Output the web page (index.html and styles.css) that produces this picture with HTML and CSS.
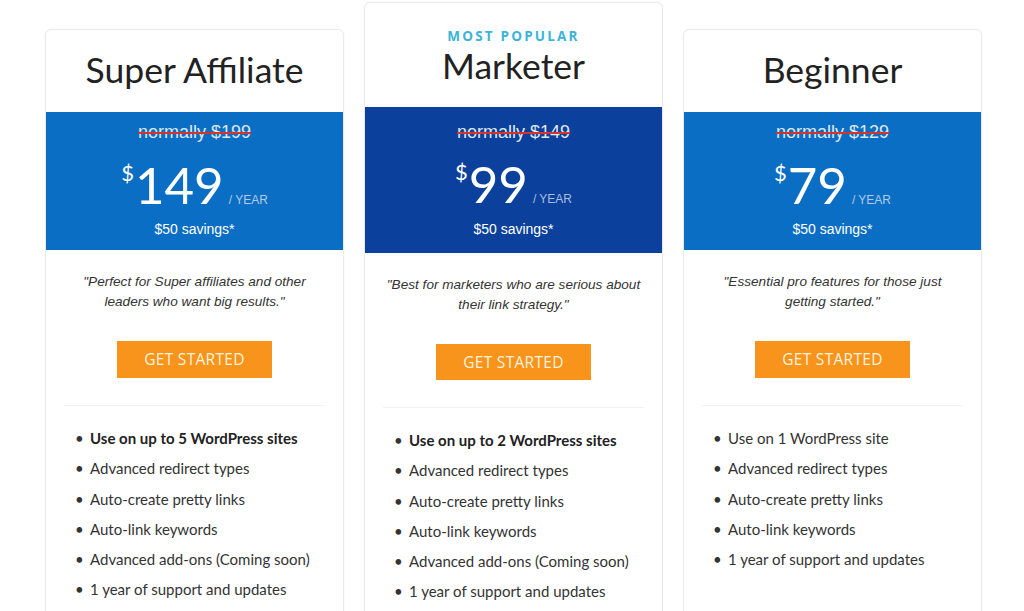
FILE: index.html
```html
<!DOCTYPE html>
<html lang="en">
<head>
<meta charset="utf-8">
<title>Pricing</title>
<link rel="stylesheet" href="styles.css">
</head>
<body>
<div class="plans">
  <div class="card side">
    <div class="head"><h2 class="title">Super Affiliate</h2></div>
    <div class="band">
      <div class="was"><s>normally $199</s></div>
      <div class="price"><span class="cur">$</span><span class="amt">149</span><span class="per">/ YEAR</span></div>
      <div class="save">$50 savings*</div>
    </div>
    <div class="body">
      <p class="quote">"Perfect for Super affiliates and other leaders who want big results."</p>
      <a class="btn" href="#">GET STARTED</a>
      <hr class="sep">
      <ul class="feats">
        <li><b>Use on up to 5 WordPress sites</b></li>
        <li>Advanced redirect types</li>
        <li>Auto-create pretty links</li>
        <li>Auto-link keywords</li>
        <li>Advanced add-ons (Coming soon)</li>
        <li>1 year of support and updates</li>
      </ul>
    </div>
  </div>
  <div class="card featured">
    <div class="head"><div class="popular">MOST POPULAR</div><h2 class="title">Marketer</h2></div>
    <div class="band">
      <div class="was"><s>normally $149</s></div>
      <div class="price"><span class="cur">$</span><span class="amt">99</span><span class="per">/ YEAR</span></div>
      <div class="save">$50 savings*</div>
    </div>
    <div class="body">
      <p class="quote">"Best for marketers who are serious about their link strategy."</p>
      <a class="btn" href="#">GET STARTED</a>
      <hr class="sep">
      <ul class="feats">
        <li><b>Use on up to 2 WordPress sites</b></li>
        <li>Advanced redirect types</li>
        <li>Auto-create pretty links</li>
        <li>Auto-link keywords</li>
        <li>Advanced add-ons (Coming soon)</li>
        <li>1 year of support and updates</li>
      </ul>
    </div>
  </div>
  <div class="card side">
    <div class="head"><h2 class="title">Beginner</h2></div>
    <div class="band">
      <div class="was"><s>normally $129</s></div>
      <div class="price"><span class="cur">$</span><span class="amt">79</span><span class="per">/ YEAR</span></div>
      <div class="save">$50 savings*</div>
    </div>
    <div class="body">
      <p class="quote">"Essential pro features for those just getting started."</p>
      <a class="btn" href="#">GET STARTED</a>
      <hr class="sep">
      <ul class="feats">
        <li>Use on 1 WordPress site</li>
        <li>Advanced redirect types</li>
        <li>Auto-create pretty links</li>
        <li>Auto-link keywords</li>
        <li>1 year of support and updates</li>
      </ul>
    </div>
  </div>
</div>
</body>
</html>
```

FILE: styles.css
```css
html, body {
  margin: 0;
  padding: 0;
  background: #ffffff;
  overflow: hidden;
}
body {
  font-family: Lato, "Liberation Sans", sans-serif;
  color: #333;
}
.plans {
  display: flex;
  align-items: flex-start;
  gap: 20px;
  padding-left: 45px;
}
.card {
  width: 299px;
  box-sizing: border-box;
  background: #fff;
  border: 1px solid #e7eaef;
  border-radius: 6px;
  box-shadow: 0 0 3px rgba(0, 0, 0, 0.04);
  padding-bottom: 60px;
}
.card.side { margin-top: 29px; }
.card.featured { margin-top: 2px; }

.head {
  text-align: center;
  padding: 20px 0 22px;
}
.featured .head { padding: 25px 0 21px; }
.title {
  margin: 0;
  font-family: Lato, sans-serif;
  font-weight: 400;
  font-size: 35.5px;
  line-height: 40px;
  color: #222;
}
.popular {
  font-family: "Open Sans", sans-serif;
  font-weight: 700;
  font-size: 13.5px;
  line-height: 16px;
  letter-spacing: 2.2px;
  color: #3ab4d9;
  margin-bottom: 2px;
}

.band {
  background: #0a6ec4;
  text-align: center;
  padding: 10px 0 12px;
  color: #fff;
}
.featured .band {
  background: #0b409d;
  padding: 15px 0 15px;
}
.was {
  font-family: "Liberation Sans", Arial, sans-serif;
  font-size: 18px;
  line-height: 20px;
  color: #dfe6ef;
}
.was s {
  text-decoration-color: #d4342c;
  text-decoration-thickness: 2px;
}
.price {
  margin-top: 13px;
  height: 60px;
  display: flex;
  justify-content: center;
  align-items: baseline;
  line-height: 60px;
}
.featured .price { margin-top: 12px; }
.cur {
  font-family: Lato, sans-serif;
  font-size: 22px;
  align-self: flex-start;
  line-height: 22px;
  margin-top: 7px;
  margin-right: 1px;
}
.amt {
  font-family: Lato, sans-serif;
  font-size: 51px;
  line-height: 60px;
}
.per {
  font-family: "Liberation Sans", Arial, sans-serif;
  font-size: 12px;
  color: #b3cbe6;
  margin-left: 5px;
}
.featured .per { color: #a9bedf; }
.save {
  margin-top: 5px;
  font-family: "Liberation Sans", Arial, sans-serif;
  font-size: 14px;
  line-height: 18px;
  color: #fff;
}
.featured .save { margin-top: 6px; }

.body {
  text-align: center;
  padding-top: 22px;
}
.quote {
  margin: 0;
  padding: 0 20px;
  font-family: "Liberation Sans", Arial, sans-serif;
  font-style: italic;
  font-size: 13.6px;
  line-height: 19.5px;
  color: #333;
}
.btn {
  display: inline-block;
  margin-top: 30px;
  width: 155px;
  height: 37px;
  line-height: 37px;
  background: #f8931b;
  color: #fff4df;
  text-decoration: none;
  font-family: "Open Sans", sans-serif;
  font-size: 15.5px;
  letter-spacing: 0.3px;
}
.featured .btn { height: 36px; line-height: 36px; }
.sep {
  border: 0;
  border-top: 1px solid #f1f2f4;
  margin: 27px 18px 0;
}
.feats {
  list-style: none;
  margin: 0;
  padding: 17px 0 0 29px;
  text-align: left;
}
.feats li {
  display: flex;
  font-size: 15px;
  line-height: 30.3px;
  color: #333;
}
.feats li::before {
  content: "\2022";
  width: 15px;
  flex: none;
  color: #333;
}
.feats b { font-weight: 700; color: #222; }
```
